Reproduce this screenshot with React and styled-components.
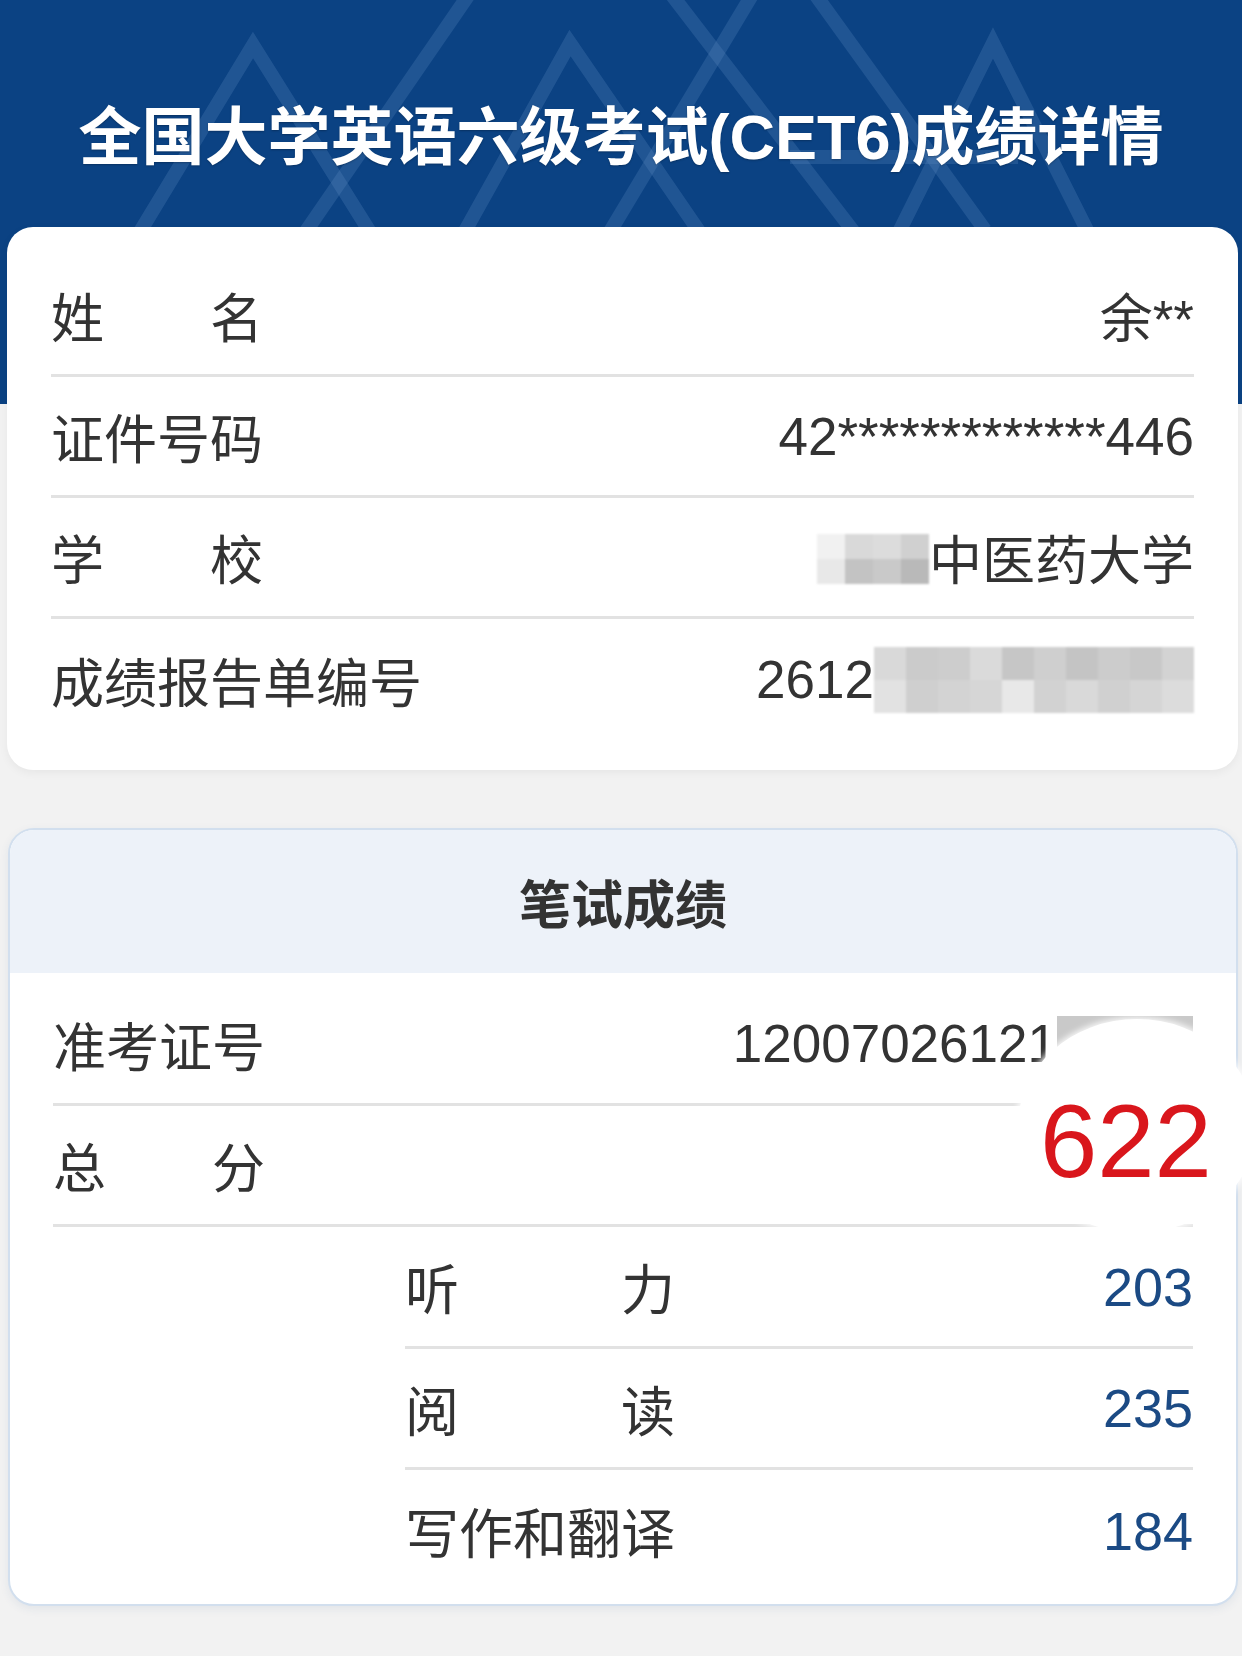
import React from 'react'
import styled, { createGlobalStyle } from 'styled-components'

const GlobalStyle = createGlobalStyle`
    body {
        margin: 0;
        background: #f2f2f2;
        font-family: "Liberation Sans", "Noto Sans CJK SC", sans-serif;
        color: #333;
    }
`

const Page = styled.div`
    width: 1242px;
    min-height: 1656px;
    background: linear-gradient(to bottom, #0b4283 0, #0b4283 404px, #f2f2f2 404px);
    overflow: hidden;
`

const Header = styled.header`
    position: relative;
    height: 227px;
    display: flex;
    justify-content: center;
    align-items: flex-start;
    padding-top: 99px;
    box-sizing: border-box;
`

const Pattern = styled.svg`
    position: absolute;
    left: 0;
    top: 0;
    width: 1242px;
    height: 227px;
`

const Title = styled.h1`
    position: relative;
    margin: 0;
    font-size: 63px;
    line-height: 76px;
    font-weight: 700;
    color: #fff;
    white-space: nowrap;
    text-shadow: 0 1px 2px rgba(0, 0, 0, 0.25);
`

const InfoCard = styled.section`
    margin: 0 4px 0 7px;
    background: #fff;
    border-radius: 26px;
    padding: 29px 44px 30px;
    box-shadow: 0 3px 10px rgba(0, 0, 0, 0.05);
`

const Row = styled.div`
    height: ${p => p.$h || 121}px;
    box-sizing: border-box;
    display: flex;
    align-items: center;
    justify-content: space-between;
    margin-left: ${p => p.$indent || 0}px;
    border-bottom: ${p => (p.$last ? 'none' : '3px solid #e2e2e2')};
`

const Label = styled.div`
    display: flex;
    justify-content: space-between;
    width: ${p => (p.$em ? `${p.$em}em` : 'auto')};
    font-size: ${p => p.$size || 53}px;
    color: #333;
    white-space: nowrap;
`

const Value = styled.div`
    display: flex;
    align-items: center;
    font-size: ${p => p.$size || 53}px;
    color: ${p => p.$color || '#333'};
    white-space: nowrap;
`

const Mosaic = styled.div`
    display: grid;
    grid-template-columns: repeat(${p => p.$cols}, ${p => p.$cw}px);
    grid-auto-rows: ${p => p.$ch}px;
    filter: blur(1.2px);
    margin-top: ${p => p.$dy || 0}px;
`

const Cell = styled.span`
    background: ${p => p.$c};
`

const ScoreCard = styled.section`
    position: relative;
    margin: 58px 4px 0 8px;
    background: #fff;
    border: 2px solid #d2dfee;
    border-radius: 26px;
    box-shadow: 0 3px 10px rgba(40, 80, 130, 0.08);
`

const ScoreHead = styled.div`
    height: 143px;
    display: flex;
    align-items: center;
    justify-content: center;
    background: #edf2f9;
    border-radius: 24px 24px 0 0;
    font-size: 52px;
    font-weight: 700;
    color: #333;
`

const ScoreBody = styled.div`
    padding: 11px 43px 13px;
`

const GreyBlock = styled.span`
    display: block;
    width: ${p => p.$w}px;
    height: ${p => p.$h}px;
    background: #c9c9c9;
`

// the round white patch around the total score
const Magnifier = styled.div`
    position: absolute;
    left: 1008px;
    top: 189px;
    width: 238px;
    height: 214px;
    border-radius: 50%;
    background: #fff;
    box-shadow: 0 0 6px 2px rgba(255, 255, 255, 0.9);
    display: flex;
    align-items: flex-start;
    padding: 71px 0 0 22px;
    box-sizing: border-box;
`

const Total = styled.span`
    font-size: 103px;
    line-height: 1;
    color: #d9161c;
    font-family: "Liberation Sans", sans-serif;
`

const schoolCells = ['#f1f1f1', '#d9d9d9', '#dcdcdc', '#d0d0d0', '#e8e8e8', '#c3c3c3', '#c9c9c9', '#b9b9b9']
const reportCells = [
    '#d9d9d9', '#cbcbcb', '#cdcdcd', '#dadada', '#c6c6c6', '#cfcfcf', '#c4c4c4', '#cccccc', '#c8c8c8', '#d3d3d3',
    '#e2e2e2', '#cfcfcf', '#d3d3d3', '#d6d6d6', '#e8e8e8', '#d2d2d2', '#d9d9d9', '#d0d0d0', '#d5d5d5', '#dcdcdc',
]

const Spread = ({ text, em, size }) => (
    <Label $em={em} $size={size}>
        {text.split('').map((ch, i) => <span key={i}>{ch}</span>)}
    </Label>
)

const App = () => {
    return (
        <>
            <GlobalStyle />
            <Page>
                <Header>
                    <Pattern viewBox="0 0 1242 227">
                        <g fill="none" stroke="#5a87bd" strokeOpacity="0.28" strokeWidth="14">
                            <polyline points="135,240 253,45 375,240" />
                            <line x1="472" y1="-10" x2="300" y2="240" />
                            <polyline points="460,240 570,43 705,240" />
                            <line x1="668" y1="-10" x2="860" y2="240" />
                            <line x1="755" y1="-10" x2="605" y2="240" />
                            <line x1="812" y1="-10" x2="985" y2="230" />
                            <polyline points="895,240 993,43 1092,240" />
                            <line x1="790" y1="157" x2="1018" y2="157" />
                        </g>
                    </Pattern>
                    <Title>全国大学英语六级考试(CET6)成绩详情</Title>
                </Header>

                <InfoCard>
                    <Row>
                        <Spread text="姓名" em={4} />
                        <Value>余**</Value>
                    </Row>
                    <Row>
                        <Spread text="证件号码" />
                        <Value>42*************446</Value>
                    </Row>
                    <Row>
                        <Spread text="学校" em={4} />
                        <Value>
                            <Mosaic $cols={4} $cw={28} $ch={25} $dy={4}>
                                {schoolCells.map((c, i) => <Cell key={i} $c={c} />)}
                            </Mosaic>
                            中医药大学
                        </Value>
                    </Row>
                    <Row $last>
                        <Spread text="成绩报告单编号" />
                        <Value>
                            2612
                            <Mosaic $cols={10} $cw={32} $ch={33}>
                                {reportCells.map((c, i) => <Cell key={i} $c={c} />)}
                            </Mosaic>
                        </Value>
                    </Row>
                </InfoCard>

                <ScoreCard>
                    <ScoreHead>笔试成绩</ScoreHead>
                    <ScoreBody>
                        <Row $h={122}>
                            <Spread text="准考证号" />
                            <Value>
                                12007026121
                                <GreyBlock $w={136} $h={56} />
                            </Value>
                        </Row>
                        <Row>
                            <Spread text="总分" em={4} />
                            <Value />
                        </Row>
                        <Row $indent={352} $h={122}>
                            <Spread text="听力" em={5} size={54} />
                            <Value $color="#1b4a84" $size={54}>203</Value>
                        </Row>
                        <Row $indent={352}>
                            <Spread text="阅读" em={5} size={54} />
                            <Value $color="#1b4a84" $size={54}>235</Value>
                        </Row>
                        <Row $indent={352} $last>
                            <Spread text="写作和翻译" em={5} size={54} />
                            <Value $color="#1b4a84" $size={54}>184</Value>
                        </Row>
                    </ScoreBody>
                    <Magnifier>
                        <Total>622</Total>
                    </Magnifier>
                </ScoreCard>
            </Page>
        </>
    )
}

export default App
